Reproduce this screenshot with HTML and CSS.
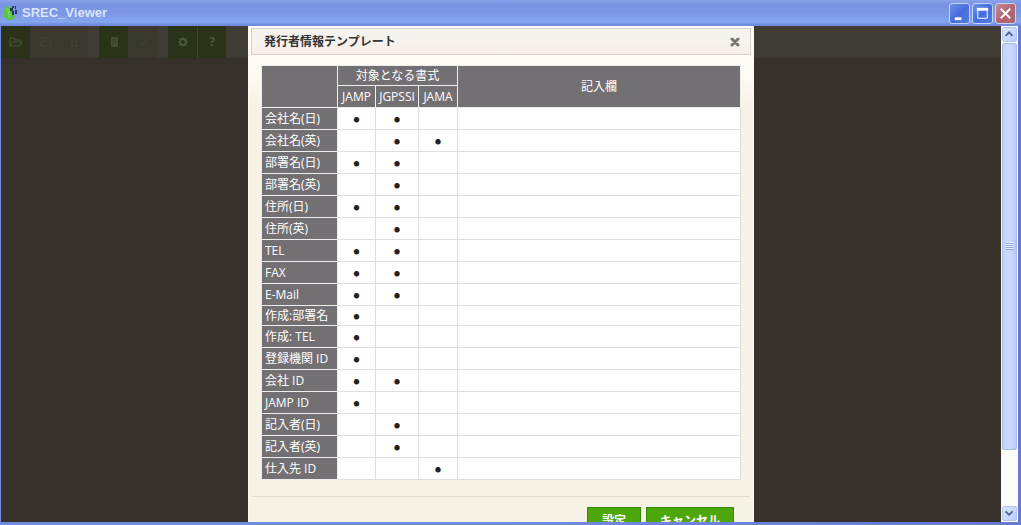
FILE: index.html
```html
<!DOCTYPE html>
<html lang="ja">
<head>
<meta charset="utf-8">
<title>SREC_Viewer</title>
<link rel="stylesheet" href="styles.css">
</head>
<body>
<div class="window">
  <header class="titlebar">
    <svg class="app-icon" viewBox="0 0 15 16" aria-hidden="true">
      <path d="M5 1C2 2 0 5 0 9c1 4 4 6 7 6 3 0 5-1 5-4L9 9 8 3z" fill="#5fc04e"/>
      <path d="M3 4c2 0 4 3 3 9" stroke="#6edb3f" stroke-width="2" fill="none"/>
      <path d="M7 3h3v3H7zM9 1h2v2H9zM12 1h1v3h-1zM12 5h2v4h-2zM9 6h2v4H9z" fill="#263653"/>
    </svg>
    <h1 class="app-title">SREC_Viewer</h1>
    <div class="window-controls">
      <button class="control" aria-label="最小化"><svg viewBox="0 0 20 20"><path d="M5 14h7v3H5z" fill="#fff"/></svg></button>
      <button class="control" aria-label="最大化"><svg viewBox="0 0 20 20"><path d="M5 6h10v9H5z" fill="none" stroke="#fff"/><path d="M4 4h12v3H4z" fill="#fff"/></svg></button>
      <button class="control control-close" aria-label="閉じる"><svg viewBox="0 0 20 20"><path d="M5 5l10 10M15 5L5 15" stroke="#fff" stroke-width="2"/></svg></button>
    </div>
  </header>
  <div class="client">
    <main class="stage">
      <nav class="toolbar">
        <button class="tool tool-on" aria-label="開く"><svg viewBox="0 0 16 16"><path d="M2 12V4h4l1 2h5v2M2 12l2-4h10l-2 4z" fill="none" stroke="#46523a"/></svg></button>
        <button class="tool" aria-label="保存" disabled><svg viewBox="0 0 16 16"><path d="M4 4h7l2 2v6H4zM6 4v3h4" fill="none" stroke="#424038"/></svg></button>
        <button class="tool" aria-label="出力" disabled><svg viewBox="0 0 16 16"><path d="M6 4v8M10 6v6M4 12h9" fill="none" stroke="#424038"/></svg></button>
        <span class="gap"></span>
        <button class="tool tool-on" aria-label="テンプレート"><svg viewBox="0 0 16 16"><path d="M5 3h7v10H5z" fill="#414d36"/><path d="M6 6h4M6 9h4" stroke="#36432a"/></svg></button>
        <button class="tool" aria-label="確認" disabled><svg viewBox="0 0 16 16"><path d="M4 9l3 3 5-7" fill="none" stroke="#424038"/></svg></button>
        <span class="gap"></span>
        <button class="tool tool-on" aria-label="設定"><svg viewBox="0 0 16 16"><circle cx="8" cy="8" r="3" fill="none" stroke="#4b583f" stroke-width="2"/><path d="M8 3v2M8 11v2M3 8h2M11 8h2M4 4l2 2M10 10l2 2M12 4l-2 2M6 10l-2 2" stroke="#4b583f"/></svg></button>
        <button class="tool tool-on tool-help" aria-label="ヘルプ">?</button>
      </nav>
      <section class="dialog" role="dialog" aria-labelledby="dialog-title">
        <header class="dialog-head">
          <h2 class="dialog-title" id="dialog-title">発行者情報テンプレート</h2>
          <button class="dialog-close" aria-label="閉じる"><svg viewBox="0 0 10 10"><path d="M2 2l6 6M8 2L2 8" stroke="#77736e" stroke-width="3" stroke-linecap="round"/></svg></button>
        </header>
        <table class="template">
          <colgroup><col class="col-name"><col class="col-jamp"><col class="col-jgpssi"><col class="col-jama"><col></colgroup>
          <thead>
            <tr><th rowspan="2"></th><th colspan="3">対象となる書式</th><th rowspan="2">記入欄</th></tr>
            <tr><th>JAMP</th><th>JGPSSI</th><th>JAMA</th></tr>
          </thead>
          <tbody>
            <tr><th>会社名(日)</th><td>●</td><td>●</td><td></td><td></td></tr>
            <tr><th>会社名(英)</th><td></td><td>●</td><td>●</td><td></td></tr>
            <tr><th>部署名(日)</th><td>●</td><td>●</td><td></td><td></td></tr>
            <tr><th>部署名(英)</th><td></td><td>●</td><td></td><td></td></tr>
            <tr><th>住所(日)</th><td>●</td><td>●</td><td></td><td></td></tr>
            <tr><th>住所(英)</th><td></td><td>●</td><td></td><td></td></tr>
            <tr><th>TEL</th><td>●</td><td>●</td><td></td><td></td></tr>
            <tr><th>FAX</th><td>●</td><td>●</td><td></td><td></td></tr>
            <tr><th>E-Mail</th><td>●</td><td>●</td><td></td><td></td></tr>
            <tr class="compact"><th>作成:部署名</th><td>●</td><td></td><td></td><td></td></tr>
            <tr><th>作成: TEL</th><td>●</td><td></td><td></td><td></td></tr>
            <tr><th>登録機関 ID</th><td>●</td><td></td><td></td><td></td></tr>
            <tr><th>会社 ID</th><td>●</td><td>●</td><td></td><td></td></tr>
            <tr><th>JAMP ID</th><td>●</td><td></td><td></td><td></td></tr>
            <tr><th>記入者(日)</th><td></td><td>●</td><td></td><td></td></tr>
            <tr><th>記入者(英)</th><td></td><td>●</td><td></td><td></td></tr>
            <tr><th>仕入先 ID</th><td></td><td></td><td>●</td><td></td></tr>
          </tbody>
        </table>
        <footer class="dialog-foot">
          <button class="action">設定</button>
          <button class="action">キャンセル</button>
        </footer>
      </section>
    </main>
    <aside class="scrollbar">
      <button class="scroll-arrow" aria-label="上へ"><svg viewBox="0 0 15 15"><path d="M3 9l4-4 4 4" fill="none" stroke="#4b608f" stroke-width="2"/></svg></button>
      <div class="scroll-track"><div class="scroll-thumb"><span class="grip"></span></div></div>
      <button class="scroll-arrow" aria-label="下へ"><svg viewBox="0 0 15 15"><path d="M3 5l4 4 4-4" fill="none" stroke="#4b608f" stroke-width="2"/></svg></button>
    </aside>
  </div>
</div>
</body>
</html>
```
FILE: styles.css
```css
* { box-sizing: border-box; }
body {
  margin: 0;
  font: 12px/18px "Open Sans", "Noto Sans CJK JP", sans-serif;
  color: #222;
}
button { margin: 0; padding: 0; border: 0; font: inherit; }
svg { display: block; }

.window {
  display: flex;
  flex-direction: column;
  height: 100vh;
  overflow: hidden;
  padding: 0 3px 3px 1px;
  background: linear-gradient(90deg, #7489e0 50%, #6678d4);
}
.titlebar {
  flex: none;
  display: flex;
  align-items: center;
  height: 26px;
  margin: 0 -3px 0 -1px;
  padding: 0 5px 0 3px;
  background: linear-gradient(#8aa2ea 0, #7b95e3 15%, #7b96e4 50%, #84a7ee 85%, #7490e2 92%, #7087dc);
}
.app-icon { width: 15px; height: 16px; margin-right: 4px; }
.app-title {
  flex: 1;
  margin: 0;
  font: bold 13px/18px "Liberation Sans", sans-serif;
  color: #dae5fb;
}
.window-controls { display: flex; gap: 2px; }
.control {
  width: 21px;
  height: 21px;
  border: 1px solid #c4d3f8;
  border-radius: 3px;
  background: linear-gradient(135deg, #6f92ec, #466ddd 50%, #5379df);
}
.control-close { background: linear-gradient(135deg, #c48a9c, #b4666f 50%, #ab6575); }

.client { flex: 1; display: flex; min-height: 0; }
.stage {
  flex: 1;
  display: grid;
  grid-template: minmax(0, 1fr) / minmax(0, 1fr);
  overflow: hidden;
  background: #36322b;
}
.toolbar {
  grid-area: 1 / 1;
  align-self: start;
  display: flex;
  height: 33px;
  background: #3e3c35;
  border-bottom: 1px solid #302d27;
}
.tool {
  display: flex;
  align-items: center;
  justify-content: center;
  width: 29px;
  height: 32px;
  background: #3a382e;
}
.tool svg { width: 16px; height: 16px; }
.tool-on { background: #2b321a; }
.tool-help { font-weight: bold; color: #4b583f; border-left: 1px solid #3e4430; }
.gap { width: 11px; background: #3e3c35; }

.dialog {
  grid-area: 1 / 1;
  justify-self: center;
  align-self: start;
  width: 506px;
  padding: 2px 3px 16px;
  background: linear-gradient(#fffdf8, #fdfaf2 50px, #f6f2e6 80px, #f6f2e6);
  border: solid #fbf9f2;
  border-width: 0 1px;
}
.dialog-head {
  display: flex;
  align-items: center;
  justify-content: space-between;
  height: 27px;
  padding: 0 10px 0 12px;
  margin: 0 -1px;
  border: 1px solid #d8d0c8;
  background: linear-gradient(#f3f2ef, #f8f3ee 55%, #f7ece4);
}
.dialog-title { margin: 0; font-size: 12px; line-height: 18px; color: #333; }
.dialog-close { background: none; }
.dialog-close svg { width: 10px; height: 10px; }

.template {
  width: calc(100% - 18px);
  margin: 10px 9px 0;
  table-layout: fixed;
  border-collapse: collapse;
}
.col-name { width: 76px; }
.col-jamp { width: 38px; }
.col-jgpssi { width: 43px; }
.col-jama { width: 39px; }
.template th, .template td {
  height: 22px;
  padding: 0;
  border: 1px solid #dedede;
  line-height: 18px;
  text-align: center;
  white-space: nowrap;
}
.template th {
  background: #737074;
  border-color: #eee;
  color: #fff;
  font-weight: normal;
}
.template thead tr:first-child th { height: 20px; }
.template tbody th { padding-left: 3px; text-align: left; }
.template td {
  padding-top: 2px;
  background: #fff;
  color: #222;
  font-size: 6px;
  line-height: 12px;
}
.template .compact th, .template .compact td { height: 20px; }

.dialog-foot {
  display: flex;
  justify-content: flex-end;
  gap: 5px;
  margin: 16px 0 0;
  padding: 10px 16px 0 0;
  border-top: 1px solid #dedccb;
}
.action {
  height: 28px;
  padding: 0 13px;
  min-width: 54px;
  border: 1px solid #35870a;
  background: #4da60c;
  color: #fff;
  font-weight: bold;
}

.scrollbar {
  flex: none;
  display: flex;
  flex-direction: column;
  width: 17px;
  padding: 1px;
  background: #fbfbfa;
}
.scroll-arrow {
  flex: none;
  height: 15px;
  border: 1px solid #b3c4ee;
  border-radius: 2px;
  background: linear-gradient(135deg, #dce6ff, #b9cbf6);
}
.scroll-arrow svg { width: 13px; height: 13px; }
.scroll-track { flex: 1; min-height: 0; padding: 1px 0; }
.scroll-thumb {
  display: flex;
  align-items: center;
  justify-content: center;
  height: 88%;
  border: 1px solid #a9bae8;
  border-radius: 2px;
  background: linear-gradient(90deg, #c5d4fb, #cbd9fd 60%, #b8c9f5);
}
.grip {
  width: 7px;
  height: 8px;
  background: repeating-linear-gradient(#eef4ff 0 1px, #8ca3dc 1px 2px);
}
```
